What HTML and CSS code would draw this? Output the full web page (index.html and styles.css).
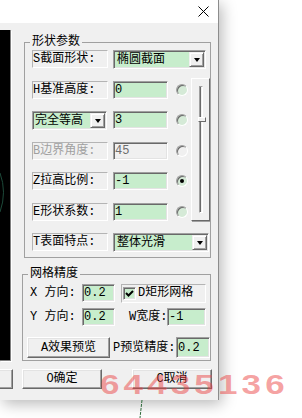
FILE: index.html
```html
<!DOCTYPE html>
<html lang="zh-CN">
<head>
    <meta charset="UTF-8">
    <title>形状参数</title>
    <link rel="stylesheet" href="styles.css">
</head>
<body>
    <div class="dialog">
        <div class="titlebar">
            <svg class="close" width="11" height="11" viewBox="0 0 11 11">
                <path d="M0.5 0.5L10.5 10.5M10.5 0.5L0.5 10.5" stroke="#000" stroke-width="1" fill="none"/>
            </svg>
        </div>

        <div class="client">
            <div class="top">
                <div class="preview">
                    <svg width="10" height="331" viewBox="0 0 10 331">
                        <path d="M0 143 Q7 162 0 182" stroke="#1d4a3a" stroke-width="1" fill="none"/>
                    </svg>
                </div>

                <div class="main">
                    <fieldset class="group shape-group">
                        <legend>形状参数</legend>
                        <div class="shape-grid">
                            <div class="slider">
                                <div class="track"></div>
                                <div class="thumb"></div>
                            </div>

                            <div class="lbl">S截面形状:</div>
                            <div class="combo wide"><span>椭圆截面</span><i class="drop"></i></div>

                            <div class="lbl">H基准高度:</div>
                            <div class="edit">0</div>
                            <span class="radio"></span>

                            <div class="combo small"><span>完全等高</span><i class="drop"></i></div>
                            <div class="edit">3</div>
                            <span class="radio"></span>

                            <div class="lbl off">B边界角度:</div>
                            <div class="edit off">45</div>
                            <span class="radio off"></span>

                            <div class="lbl">Z拉高比例:</div>
                            <div class="edit">-1</div>
                            <span class="radio on"></span>

                            <div class="lbl">E形状系数:</div>
                            <div class="edit">1</div>
                            <span class="radio"></span>

                            <div class="lbl">T表面特点:</div>
                            <div class="combo wide last"><span>整体光滑</span><i class="drop"></i></div>
                        </div>
                    </fieldset>

                    <fieldset class="group mesh-group">
                        <legend>网格精度</legend>
                        <div class="mrow">
                            <span class="mlbl">X 方向:</span>
                            <div class="edit e33">0.2</div>
                            <div class="chkbox">
                                <span class="check">
                                    <svg width="11" height="11" viewBox="0 0 11 11">
                                        <path d="M2 5L4.5 7.5L9 3" stroke="#000" stroke-width="2" fill="none"/>
                                    </svg>
                                </span>D矩形网格
                            </div>
                        </div>
                        <div class="mrow r2">
                            <span class="mlbl">Y 方向:</span>
                            <div class="edit e33">0.2</div>
                            <span class="wlbl">W宽度:</span>
                            <div class="edit e39">-1</div>
                        </div>
                        <div class="mrow r3">
                            <button class="btn effect">A效果预览</button>
                            <span class="plbl">P预览精度:</span>
                            <div class="edit e34">0.2</div>
                        </div>
                    </fieldset>
                </div>
            </div>

            <div class="actions">
                <button class="btn cut"></button>
                <button class="btn ok">O确定</button>
                <button class="btn cancel">C取消</button>
            </div>
        </div>
    </div>

    <div class="watermark">64435136</div>
    <svg class="wire" width="6" height="18" viewBox="0 0 6 18">
        <path d="M4 0L2 18" stroke="#2f6b3c" stroke-width="1" stroke-dasharray="3 1" fill="none"/>
    </svg>
</body>
</html>
```

FILE: styles.css
```css
/* Reset */
* {
    margin: 0;
    padding: 0;
    box-sizing: border-box;
}

body {
    width: 302px;
    height: 418px;
    overflow: hidden;
    position: relative;
    background-color: #fff;
    color: #000;
    font-family: "Liberation Mono", "Noto Sans CJK SC", monospace;
    font-size: 12px;
    line-height: 14px;
}

/* Ventana */
.dialog {
    width: 219px;
    height: 400px;
    display: flex;
    flex-direction: column;
    background-color: #f0f0f0;
    border-right: 1px solid #8c8c8c;
    box-shadow: 3px 4px 14px rgba(0, 0, 0, 0.28);
}

.titlebar {
    height: 23px;
    background-color: #fff;
    display: flex;
    align-items: center;
    justify-content: flex-end;
    padding-right: 9px;
}

.client {
    flex: 1;
    display: flex;
    flex-direction: column;
}

.top {
    display: flex;
}

.preview {
    width: 11px;
    height: 331px;
    margin-top: 7px;
    background-color: #000;
    border-right: 1px solid #808080;
    border-bottom: 1px solid #808080;
    box-shadow: 1px 1px 0 #fff;
}

.preview svg {
    display: block;
}

.main {
    margin-left: 11px;
}

/* Cuadros de grupo */
.group {
    border: 1px solid #a0a0a0;
    min-width: 0;
}

.group legend {
    padding: 0 2px;
    line-height: 14px;
}

.shape-group {
    width: 187px;
    margin: 12px 0 0 2px;
    padding: 1px 0 6px 7px;
}

.shape-group legend {
    margin-left: -2px;
}

.mesh-group {
    width: 189px;
    margin-top: 9px;
    padding: 3px 0 2px 4px;
}

.mesh-group legend {
    margin-left: 1px;
}

.shape-grid {
    display: grid;
    grid-template-columns: 81px 55px 23px 19px;
    grid-template-rows: repeat(7, 18px);
    row-gap: 12.5px;
}

/* Controles */
.lbl {
    width: 76px;
    height: 18px;
    display: flex;
    align-items: center;
    white-space: nowrap;
    border: 1px solid;
    border-color: #b4b4b4 #fff #fff #b4b4b4;
}

.off {
    color: #a0a0a0;
}

.edit {
    height: 18px;
    display: flex;
    align-items: center;
    padding-left: 1px;
    background-color: #c7edcc;
    border: 1px solid;
    border-color: #a0a0a0 #fff #fff #a0a0a0;
    box-shadow: inset 1px 1px 0 #696969, inset -1px -1px 0 #e3e3e3;
    white-space: nowrap;
}

.edit.off {
    background-color: #f0f0f0;
    color: #6d6d6d;
}

.combo {
    height: 19px;
    display: flex;
    align-items: center;
    padding: 1px 1px 1px 3px;
    background-color: #c7edcc;
    border: 1px solid;
    border-color: #a0a0a0 #fff #fff #a0a0a0;
    box-shadow: inset 1px 1px 0 #696969, inset -1px -1px 0 #e3e3e3;
    white-space: nowrap;
}

.combo span {
    flex: 1;
}

.combo.wide {
    grid-column: 2 / 5;
    margin-right: 4px;
}

.combo.last {
    margin-right: 1px;
}

.combo.small {
    width: 75px;
    padding-left: 2px;
}

.drop {
    width: 15px;
    height: 15px;
    display: flex;
    align-items: center;
    justify-content: center;
    background-color: #f0f0f0;
    border: 1px solid;
    border-color: #f0f0f0 #696969 #696969 #f0f0f0;
    box-shadow: inset 1px 1px 0 #fff, inset -1px -1px 0 #a0a0a0;
}

.drop::after {
    content: "";
    border-left: 3.5px solid transparent;
    border-right: 3.5px solid transparent;
    border-top: 4px solid #000;
}

.radio {
    position: relative;
    width: 12px;
    height: 12px;
    margin-left: 8px;
    align-self: center;
    border-radius: 50%;
    background-color: #d5ead7;
    border: 1px solid;
    border-color: #a0a0a0 #fff #fff #a0a0a0;
    box-shadow: inset 1px 1px 0 #696969;
}

.radio.off {
    background-color: #f0f0f0;
}

.radio.on::after {
    content: "";
    position: absolute;
    left: 3px;
    top: 3px;
    width: 4px;
    height: 4px;
    border-radius: 50%;
    background-color: #000;
}

/* Barra deslizante */
.slider {
    position: relative;
    grid-column: 4;
    grid-row: 2 / 7;
    margin-top: -3px;
    padding: 7px 0 7px 7px;
    border: 1px solid;
    border-color: #fff #696969 #696969 #fff;
    box-shadow: 1px 1px 0 #a0a0a0;
}

.track {
    width: 4px;
    height: 100%;
    border: 1px solid;
    border-color: #a0a0a0 #fff #fff #a0a0a0;
    box-shadow: inset 1px 0 0 #696969;
}

.thumb {
    position: absolute;
    left: 6px;
    top: 38px;
    width: 8px;
    height: 5px;
    background-color: #f0f0f0;
    border: 1px solid;
    border-color: #fff #696969 #696969 #fff;
}

/* Filas de malla */
.mrow {
    display: flex;
    align-items: center;
    height: 18px;
}

.mrow.r2 {
    margin-top: 6px;
}

.mrow.r3 {
    margin-top: 11px;
    height: 21px;
}

.mlbl {
    width: 55px;
    padding-left: 3px;
    white-space: nowrap;
}

.e33 {
    width: 33px;
}

.e39 {
    width: 39px;
}

.e34 {
    width: 34px;
    height: 21px;
}

.chkbox {
    width: 85px;
    height: 19px;
    margin-left: 6px;
    padding-left: 1px;
    display: flex;
    align-items: center;
    white-space: nowrap;
    border: 1px solid;
    border-color: #b4b4b4 #fff #fff #b4b4b4;
}

.check {
    width: 13px;
    height: 13px;
    margin-right: 2px;
    display: flex;
    background-color: #c7edcc;
    border: 1px solid;
    border-color: #a0a0a0 #fff #fff #a0a0a0;
    box-shadow: inset 1px 1px 0 #696969, inset -1px -1px 0 #e3e3e3;
}

.wlbl {
    width: 38px;
    margin-left: 14px;
    white-space: nowrap;
}

.plbl {
    width: 63px;
    margin-left: 3px;
    white-space: nowrap;
}

/* Botones */
.btn {
    height: 21px;
    font: inherit;
    color: #000;
    background-color: #f0f0f0;
    border: 1px solid;
    border-color: #fff #696969 #696969 #fff;
    box-shadow: inset -1px -1px 0 #a0a0a0, inset 1px 1px 0 #e3e3e3;
}

.btn.effect {
    width: 83px;
}

.actions {
    display: flex;
    margin-top: 8px;
}

.actions .btn {
    width: 80px;
    height: 20px;
}

.btn.cut {
    margin-left: -67px;
}

.btn.ok {
    margin-left: 9px;
}

.btn.cancel {
    margin-left: 30px;
}

/* Marca de agua */
.watermark {
    position: absolute;
    left: 100px;
    top: 371px;
    font: bold 28px/28px "Liberation Sans", sans-serif;
    letter-spacing: 3.3px;
    color: rgba(235, 60, 60, 0.48);
    transform: scaleX(1.25);
    transform-origin: left top;
    white-space: nowrap;
}

.wire {
    position: absolute;
    left: 138px;
    top: 400px;
}
```
